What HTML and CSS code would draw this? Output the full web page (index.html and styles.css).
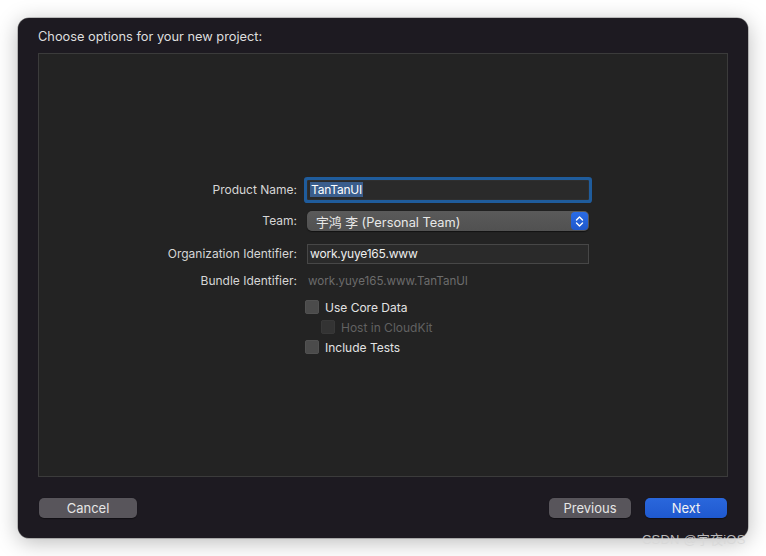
FILE: index.html
```html
<!DOCTYPE html>
<html>
<head>
<meta charset="utf-8">
<link rel="stylesheet" href="styles.css">
</head>
<body>
<div class="window">
  <div class="title">Choose options for your new project:</div>
  <div class="panel">
    <div class="form">
      <div class="label r1">Product Name:</div>
      <div class="field focus r1"><span class="sel">TanTanUI</span></div>

      <div class="label r2">Team:</div>
      <div class="popup r2"><span class="popup-text">宇鸿 李 (Personal Team)</span>
        <span class="stepper">
          <svg width="9" height="13" viewBox="0 0 9 13"><path d="M1.5 5 L4.5 2 L7.5 5 M1.5 8 L4.5 11 L7.5 8" fill="none" stroke="#fff" stroke-width="1.4" stroke-linecap="round" stroke-linejoin="round"/></svg>
        </span>
      </div>

      <div class="label r3">Organization Identifier:</div>
      <div class="field r3">work.yuye165.www</div>

      <div class="label r4">Bundle Identifier:</div>
      <div class="bundle r4">work.yuye165.www.TanTanUI</div>

      <div class="check r5"><span class="box"></span><span>Use Core Data</span></div>
      <div class="check sub disabled r6"><span class="box"></span><span>Host in CloudKit</span></div>
      <div class="check r7"><span class="box"></span><span>Include Tests</span></div>
    </div>
  </div>
  <div class="buttons">
    <div class="btn">Cancel</div>
    <div class="right">
      <div class="btn">Previous</div>
      <div class="btn primary">Next</div>
    </div>
  </div>
</div>
<div class="watermark">CSDN @宇夜iOS</div>
</body>
</html>
```
FILE: styles.css
```css
* { box-sizing: border-box; }
html, body { margin: 0; padding: 0; }
body {
  width: 766px;
  height: 556px;
  background: #ffffff;
  font-family: Inter, "Noto Sans CJK SC", "Liberation Sans", sans-serif;
  font-size: 12px;
  color: #e4e4e4;
  overflow: hidden;
  position: relative;
  padding-top: 18px;
}
.window {
  margin-left: 18px;
  width: 730px;
  height: 520px;
  background: #1d1a21;
  border-radius: 11px;
  box-shadow: 0 4px 22px rgba(0,0,0,0.28), 0 0 0 0.5px rgba(0,0,0,0.4);
  padding: 0 20px;
  display: flex;
  flex-direction: column;
}
.title {
  height: 35px;
  line-height: 37px;
  font-size: 12.8px;
  color: #dedede;
}
.panel {
  height: 424px;
  background: #232323;
  border: 1px solid #3b3b3b;
}
.form {
  display: grid;
  grid-template-columns: 258px 282px;
  column-gap: 10px;
  padding-top: 126px;
  align-items: center;
}
.label {
  text-align: right;
  color: #d6d6d6;
  grid-column: 1;
}
.r1 { grid-row: 1; height: 20px; }
.r2 { grid-row: 2; height: 20px; margin-top: 11px; }
.r3 { grid-row: 3; height: 20px; margin-top: 13px; }
.r4 { grid-row: 4; height: 18px; margin-top: 8px; }
.r5 { grid-row: 5; height: 18px; margin-top: 8px; }
.r6 { grid-row: 6; height: 18px; margin-top: 2px; }
.r7 { grid-row: 7; height: 18px; margin-top: 2px; }
.label { line-height: 20px; }
.label.r4 { line-height: 18px; }
.field {
  grid-column: 2;
  background: #2a2a2a;
  border: 1px solid #474747;
  line-height: 18px;
  padding-left: 2px;
  color: #eeeeee;
  font-size: 12px;
  letter-spacing: -0.2px;
}
.field.focus {
  border-color: #2f2f2f;
  box-shadow: 0 0 0 3px #1f5c9c;
  border-radius: 1px;
}
.sel {
  background: #3a5d8c;
  padding: 0 1px;
  color: #ffffff;
}
.popup {
  grid-column: 2;
  background: linear-gradient(#5a5a5a, #515151);
  border-radius: 5px;
  display: flex;
  align-items: center;
  justify-content: space-between;
  padding-left: 9px;
  padding-right: 1px;
  box-shadow: 0 0.5px 1px rgba(0,0,0,0.5);
}
.popup-text {
  color: #e8e8e8;
  font-size: 12.8px;
}
.stepper {
  width: 17px;
  height: 18px;
  border-radius: 4px;
  background: linear-gradient(#2a6ce6, #1f58cc);
  display: flex;
  align-items: center;
  justify-content: center;
}
.bundle {
  grid-column: 2;
  color: #6c6c6c;
  padding-left: 1px;
  line-height: 18px;
  font-size: 11.6px;
}
.check {
  grid-column: 2;
  display: flex;
  align-items: center;
  gap: 6px;
  margin-left: -2px;
  color: #e2e2e2;
}
.check.sub { margin-left: 14px; }
.box {
  width: 14px;
  height: 14px;
  border-radius: 3px;
  background: #4b4b4b;
  box-shadow: inset 0 0 0 0.5px #5a5a5a;
}
.disabled { color: #616161; }
.disabled .box { background: #333333; box-shadow: inset 0 0 0 0.5px #3e3e3e; }
.buttons {
  margin-top: 21px;
  display: flex;
  justify-content: space-between;
  padding: 0 1px;
}
.right { display: flex; gap: 14px; }
.btn {
  width: 98px;
  height: 20px;
  line-height: 20px;
  border-radius: 5px;
  background: #58555b;
  text-align: center;
  font-size: 13px;
  color: #e6e6e6;
  box-shadow: 0 0.5px 1px rgba(0,0,0,0.4);
}
.right .btn { width: 82px; }
.btn.primary {
  background: linear-gradient(#2a67dc, #1f59cf);
  color: #f2f2f2;
}
.watermark {
  position: absolute;
  left: 642px;
  top: 529px;
  font-size: 13px;
  color: rgba(215,215,215,0.85);
  letter-spacing: 0.2px;
  font-family: "Liberation Sans", "Noto Sans CJK SC", sans-serif;
}
```
